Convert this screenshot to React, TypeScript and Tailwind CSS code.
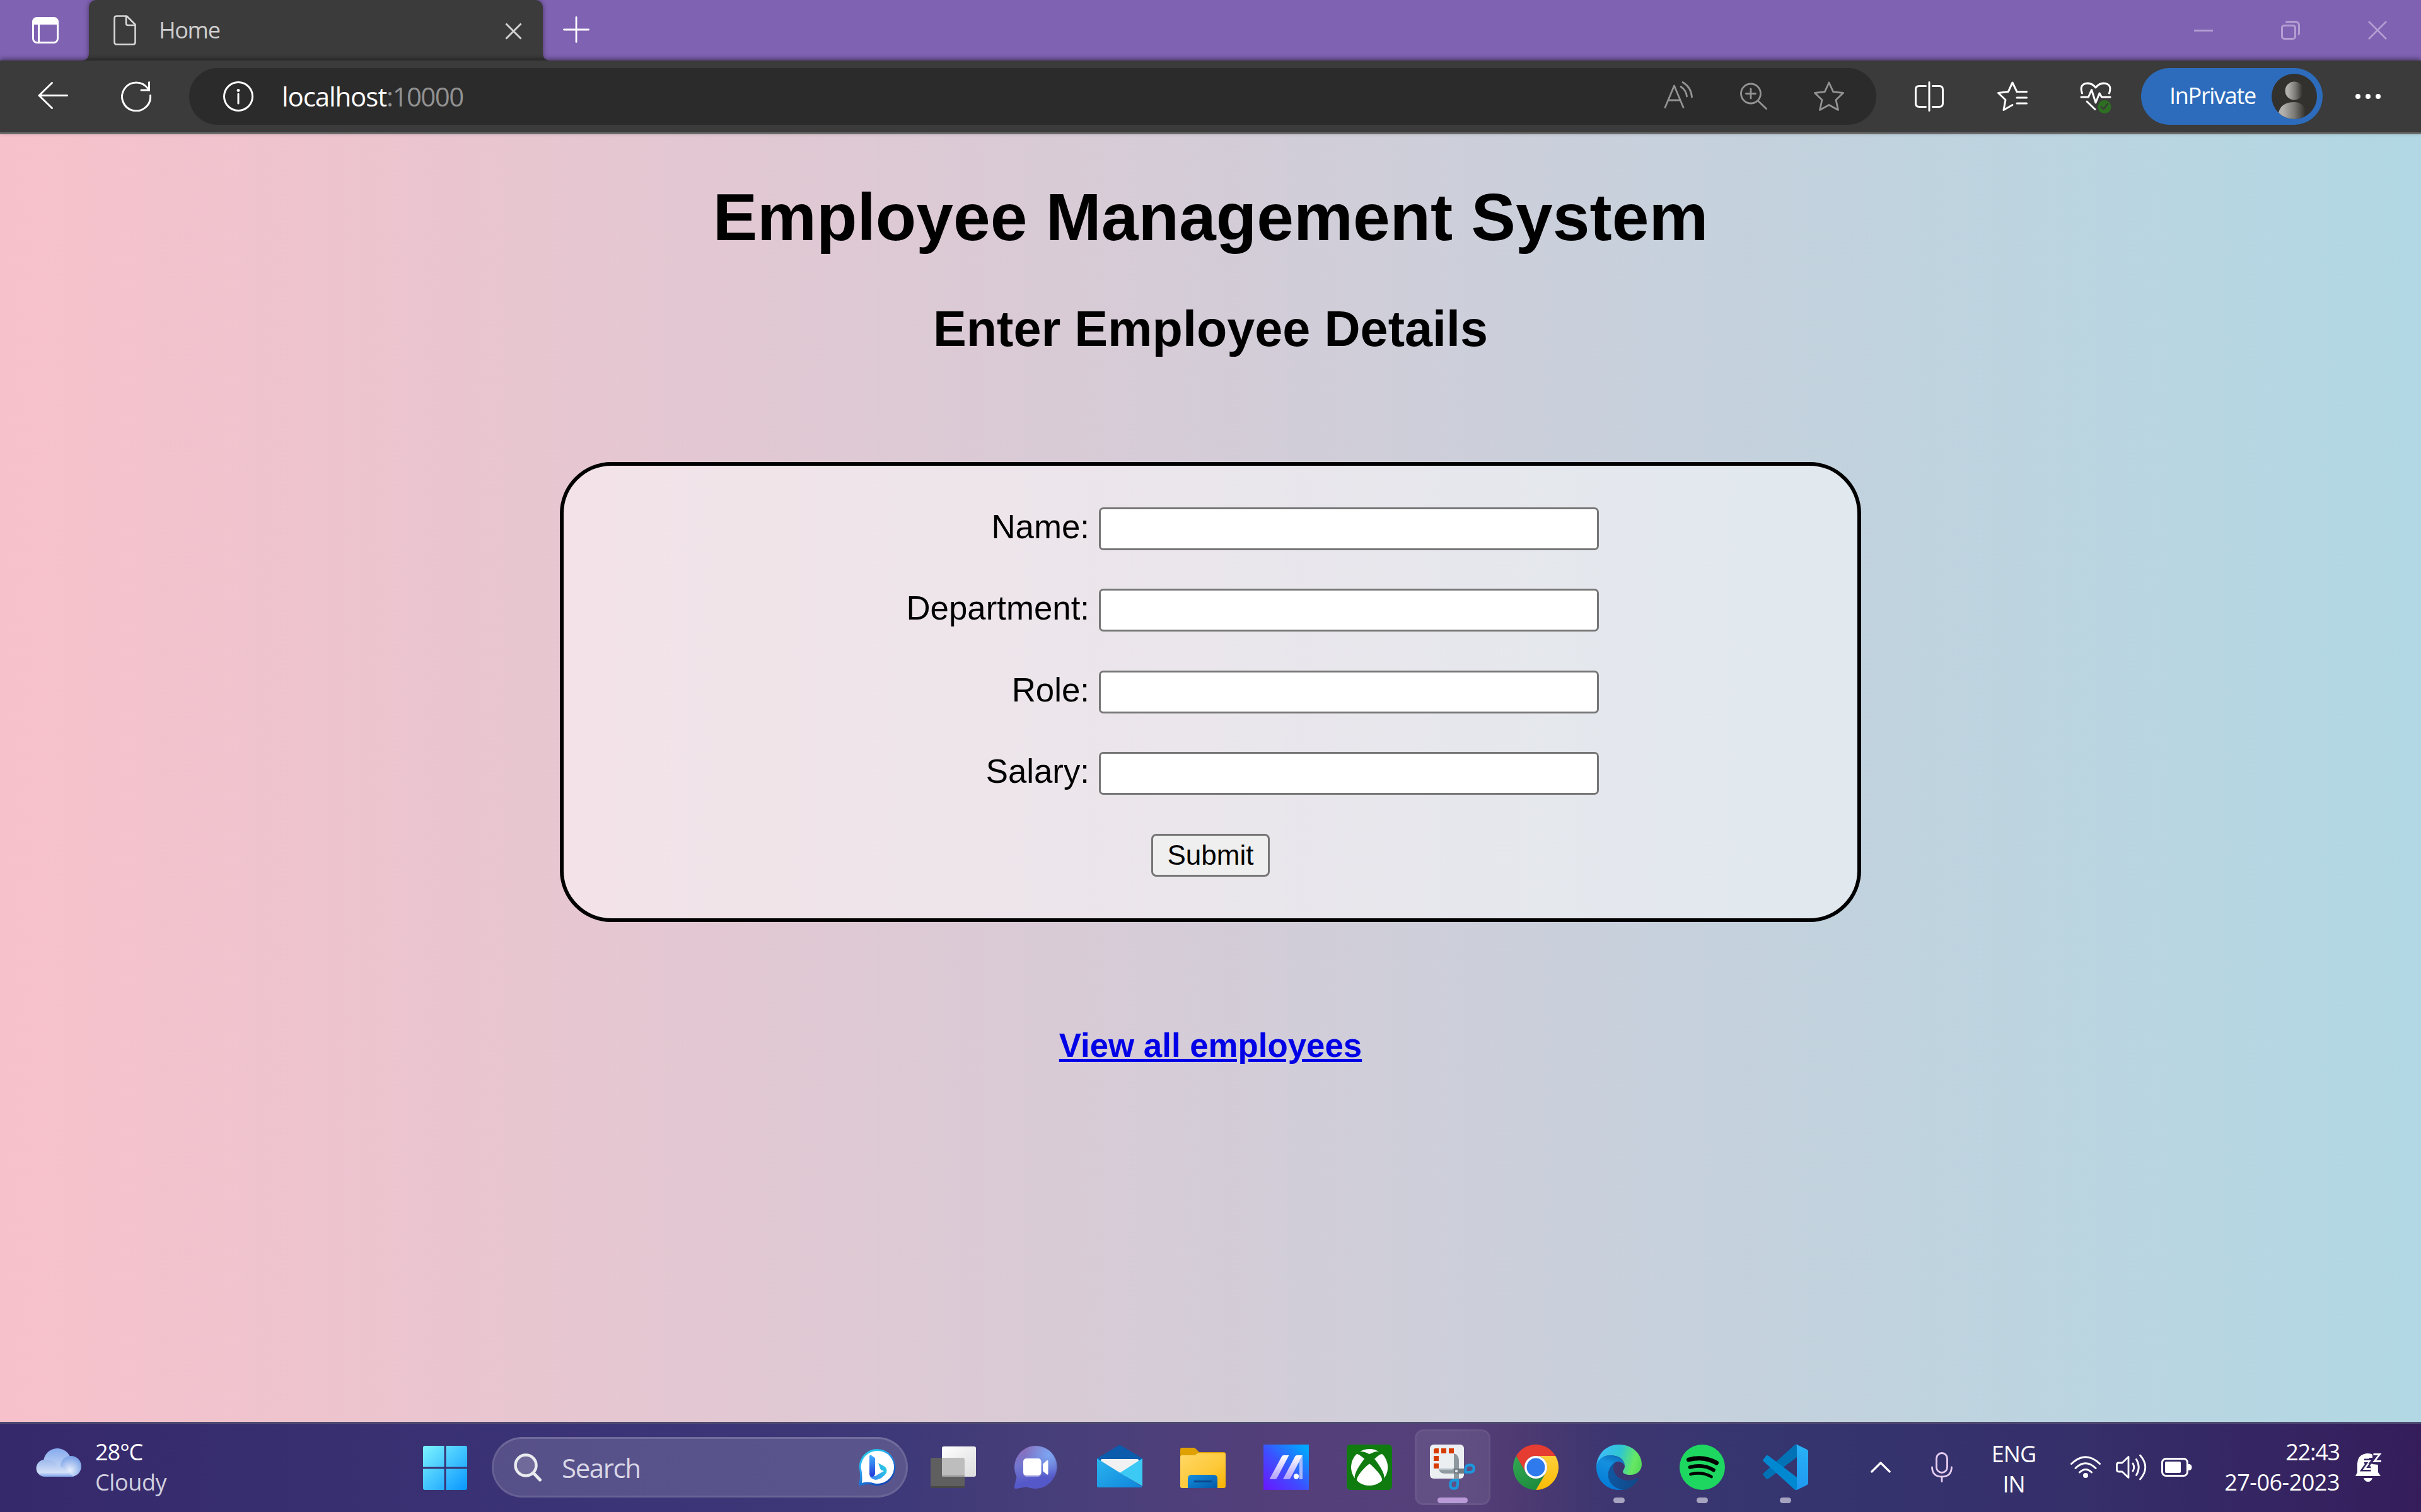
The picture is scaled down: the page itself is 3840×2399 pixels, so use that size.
import React from "react";
import { FaXbox } from "react-icons/fa";

const UI_FONT = "font-['Open_Sans','Noto_Sans',sans-serif]";
const PAGE_FONT = "font-['Liberation_Sans',Arial,sans-serif]";

/* ---------- Title bar ---------- */

function TabStrip() {
  return (
    <div className="flex h-[96px] items-stretch bg-[#8062b3]">
      <div className="flex w-[141px] items-center pl-[51px]">
        <svg className="size-[42px]" viewBox="0 0 42 42" fill="none">
          <rect x="1.5" y="1.5" width="39" height="39" rx="6" stroke="#fff" strokeWidth="3" />
          <path d="M1 7Q1 1 7 1H35Q41 1 41 7V12H1Z" fill="#fff" />
          <path d="M10.5 12V40" stroke="#fff" strokeWidth="3" />
        </svg>
      </div>

      <div className="relative flex w-[720px] items-center rounded-t-[12px] bg-[#3b3b3b] pl-[39px] pr-[33px] shadow-[0_0_9px_rgba(0,0,0,0.45)]">
        <svg className="absolute -left-[12px] bottom-0 size-[12px]" viewBox="0 0 12 12">
          <path d="M12 0V12H0Q12 12 12 0Z" fill="#3b3b3b" />
        </svg>
        <svg className="absolute -right-[12px] bottom-0 size-[12px]" viewBox="0 0 12 12">
          <path d="M0 0V12H12Q0 12 0 0Z" fill="#3b3b3b" />
        </svg>
        <svg className="h-[48px] w-[36px]" viewBox="0 0 36 48" fill="none" stroke="#d8d8d8" strokeWidth="2.6" strokeLinejoin="round">
          <path d="M5 1.5H21L34.5 15V43Q34.5 46.5 31 46.5H5Q1.5 46.5 1.5 43V5Q1.5 1.5 5 1.5Z" />
          <path d="M20 2V13Q20 16 23 16H34" />
        </svg>
        <span className="ml-[36px] flex-1 pb-px text-[36px] leading-[48px] tracking-[-1.3px] text-[#cfcfcf]">Home</span>
        <svg className="mt-[3px] size-[27px]" viewBox="0 0 27 27" stroke="#d2d2d2" strokeWidth="3">
          <path d="M1.5 1.5L25.500 25.500M25.500 1.500L1.500 25.500" />
        </svg>
      </div>

      <div className="flex items-center pl-[32px] pb-[3px]">
        <svg className="size-[42px]" viewBox="0 0 42 42" stroke="#fff" strokeWidth="2.8" strokeLinecap="round">
          <path d="M21 1.500V40.500M1.500 21H40.500" />
        </svg>
      </div>

      <div className="ml-auto flex text-[#b39fd2]">
        <div className="flex w-[138px] items-center justify-center">
          <div className="h-[3px] w-[30px] bg-[#b39fd2]" />
        </div>
        <div className="flex w-[138px] items-center justify-center">
          <svg className="size-[30px]" viewBox="0 0 30 30" fill="none" stroke="currentColor" strokeWidth="3">
            <rect x="1.500" y="7.500" width="21" height="21" rx="3.500" />
            <path d="M7.500 2.500Q9 1.500 11 1.500H22Q28.500 1.500 28.500 8V19Q28.500 21 27.500 22.500" />
          </svg>
        </div>
        <div className="flex w-[138px] items-center justify-center">
          <svg className="size-[30px]" viewBox="0 0 30 30" stroke="currentColor" strokeWidth="2.600">
            <path d="M1 1L29 29M29 1L1 29" />
          </svg>
        </div>
      </div>
    </div>
  );
}

/* ---------- Address bar ---------- */

function ToolSlot({ children }: { children: React.ReactNode }) {
  return <div className="flex w-[132px] shrink-0 items-center justify-center">{children}</div>;
}

function Avatar() {
  return (
    <svg className="size-[72px]" viewBox="0 0 72 72">
      <defs>
        <linearGradient id="avatar" x1="0" x2="1" y1="0" y2="0">
          <stop offset="0.15" stopColor="#b3b1ae" />
          <stop offset="0.55" stopColor="#7d7b78" />
          <stop offset="0.95" stopColor="#33312e" />
        </linearGradient>
        <clipPath id="avatarClip">
          <circle cx="36" cy="36" r="36" />
        </clipPath>
      </defs>
      <circle cx="36" cy="36" r="36" fill="#33312e" />
      <g clipPath="url(#avatarClip)" fill="url(#avatar)">
        <circle cx="36" cy="27" r="14.500" />
        <path d="M11 62Q15 45 36 45Q51 45 56 62L50 72H22Z" />
      </g>
    </svg>
  );
}

function Toolbar() {
  return (
    <div className="relative z-10 flex h-[117px] items-center border-b-[3px] border-[#6b6b6b] bg-[#3b3b3b] pl-[18px] text-white shadow-[0_-3px_7px_rgba(0,0,0,0.4)]">
      <ToolSlot>
        <svg className="size-[48px]" viewBox="0 0 48 48" fill="none" stroke="currentColor" strokeWidth="3" strokeLinecap="round" strokeLinejoin="round">
          <path d="M22.500 2.500L2 22.500L22.500 42.500M2 22.500H46.500" />
        </svg>
      </ToolSlot>
      <ToolSlot>
        <svg className="size-[48px]" viewBox="0 0 48 48" fill="none" stroke="currentColor" strokeWidth="3" strokeLinecap="round">
          <path d="M46.500 22.500A22.500 22.500 0 1 1 42.500 11.500L44.500 14" />
          <path d="M44.500 1.500V14H32" />
        </svg>
      </ToolSlot>

      <div className="mx-[18px] flex h-[90px] w-[2676px] shrink-0 items-center rounded-full bg-[#2b2b2b] pl-[54px]">
        <svg className="size-[48px]" viewBox="0 0 48 48" fill="none" stroke="currentColor" strokeWidth="3">
          <circle cx="24" cy="24" r="22.500" />
          <path d="M24 20V35" strokeLinecap="round" />
          <circle cx="24" cy="14.500" r="2.400" fill="currentColor" stroke="none" />
        </svg>
        <div className="ml-[45px] flex-1 pb-px text-[42px] leading-[56px]">
          <span className="tracking-[-1.1px]">localhost</span>
          <span className="tracking-[-1.6px] text-[#929292]">:10000</span>
        </div>
        <div className="flex items-center text-[#939393]">
          <svg className="size-[48px]" viewBox="0 0 48 48" fill="none" stroke="currentColor" strokeWidth="2.800" strokeLinecap="round" strokeLinejoin="round">
            <path d="M2 41.500L16.500 7L31 41.500M7 30H26" />
            <path d="M27 8.500Q35.500 14 36.500 24" />
            <path d="M30 1.500Q43.500 9.500 44.500 25" />
          </svg>
          <svg className="ml-[72px] size-[48px]" viewBox="0 0 48 48" fill="none" stroke="currentColor" strokeWidth="2.800" strokeLinecap="round">
            <circle cx="18" cy="19.500" r="15.500" />
            <path d="M29.500 31L42.500 43.500M18 12V27M10.500 19.500H25.500" />
          </svg>
          <svg className="ml-[69px] mr-[50px] size-[50px]" viewBox="0 0 50 50" fill="none" stroke="currentColor" strokeWidth="2.800" strokeLinejoin="round">
            <path d="M25 3L31.700 17.600L47.500 19.500L36 30.500L39.500 46.500L25 38.500L10.500 46.500L14 30.500L2.500 19.500L18.300 17.600Z" />
          </svg>
        </div>
      </div>

      <ToolSlot>
        <svg className="size-[48px]" viewBox="0 0 48 48" fill="none" stroke="currentColor" strokeWidth="3" strokeLinecap="round">
          <path d="M24 1.500V46.500M18.500 7.500H8Q2.500 7.500 2.500 13V35Q2.500 40.500 8 40.500H18.500M29.500 7.500H40Q45.500 7.500 45.500 13V35Q45.500 40.500 40 40.500H29.500" />
        </svg>
      </ToolSlot>
      <ToolSlot>
        <svg className="size-[50px]" viewBox="0 0 50 50" fill="none" stroke="currentColor" strokeWidth="3" strokeLinecap="round" strokeLinejoin="round">
          <path d="M47.500 17.500H32L25 3L18.300 17.600L2.500 19.500L14 30.500L11 46.500L25 38.500" />
          <path d="M32 27H47.500M32 36H47.500" />
        </svg>
      </ToolSlot>
      <ToolSlot>
        <svg className="size-[54px]" viewBox="0 0 54 54" fill="none" strokeLinecap="round" strokeLinejoin="round">
          <g stroke="#fff" strokeWidth="3">
            <path d="M5.500 22Q1 9 11 6.500Q20 4.500 27 13Q34 4.500 43 6.500Q53 9 48.500 22" />
            <path d="M4 28H15.500L20.500 16.500L27 37L33 22L36.500 28H50" />
            <path d="M13 35L26 47.500" />
          </g>
          <circle cx="41" cy="43.500" r="10.500" fill="#2d7021" />
          <path d="M36 43.500L39.500 47L46 39" stroke="#3b3b3b" strokeWidth="2.600" />
        </svg>
      </ToolSlot>

      <div className="ml-[6px] flex h-[90px] w-[288px] shrink-0 items-center justify-between rounded-full bg-[#2d6cbc] pl-[45px] pr-[9px]">
        <span className="pb-[2px] text-[36px] leading-[48px] tracking-[-1.3px]">InPrivate</span>
        <Avatar />
      </div>

      <div className="ml-[6px] flex w-[132px] items-center justify-center gap-[8px]">
        <span className="size-[8px] rounded-full bg-white" />
        <span className="size-[8px] rounded-full bg-white" />
        <span className="size-[8px] rounded-full bg-white" />
      </div>
    </div>
  );
}

/* ---------- Web page ---------- */

const FIELDS = ["Name", "Department", "Role", "Salary"];

function EmployeePage() {
  return (
    <main className={`${PAGE_FONT} flex h-[2043px] flex-col items-center bg-[linear-gradient(90deg,#f7c1cb,#b1d8e4)] pt-[71px] text-[52.8px] text-black`}>
      <h1 className="text-[105.6px] leading-[120px] font-bold">Employee Management System</h1>
      <h2 className="mt-[72px] text-[79.2px] leading-[91px] font-bold">Enter Employee Details</h2>
      <form className="mt-[166px] flex h-[730px] w-[2064px] flex-col gap-[61.4px] rounded-[82px] border-[6px] border-black bg-white/50 pt-[66px]">
        {FIELDS.map((field) => (
          <div key={field} className="flex gap-[15px]">
            <label className="w-[834px] text-right leading-[62px]">{field}:</label>
            <input className="h-[68px] w-[793px] rounded-[7px] border-[3px] border-[#767676] bg-white" />
          </div>
        ))}
        <button type="button" className="h-[68px] w-[188px] self-center rounded-[8px] border-[3px] border-[#767676] bg-[#efefef] text-[44px] leading-[60px]">
          Submit
        </button>
      </form>
      <a className="mt-[166px] leading-[60px] font-bold text-[#0000e6] underline" href="#employees">
        View all employees
      </a>
    </main>
  );
}

/* ---------- Taskbar icons ---------- */

function CloudIcon() {
  return (
    <svg className="h-[45px] w-[72px]" viewBox="0 0 72 45">
      <defs>
        <linearGradient id="cloudTop" x1="0" x2="0" y1="0" y2="1">
          <stop offset="0" stopColor="#86abee" />
          <stop offset="0.700" stopColor="#c3d4f4" />
        </linearGradient>
        <radialGradient id="cloudRight" cx="0.450" cy="0.700" r="0.700">
          <stop offset="0" stopColor="#e8effc" />
          <stop offset="1" stopColor="#769ee6" />
        </radialGradient>
        <linearGradient id="cloudLeft" x1="0" x2="0" y1="0" y2="1">
          <stop offset="0" stopColor="#9db9ec" />
          <stop offset="0.750" stopColor="#d3e0f8" />
          <stop offset="1" stopColor="#7ea4ea" />
        </linearGradient>
      </defs>
      <circle cx="34" cy="22" r="22" fill="url(#cloudTop)" />
      <circle cx="55.500" cy="28.500" r="16.500" fill="url(#cloudRight)" />
      <path d="M14 18Q34 18 36 34Q38 26 42 30L60 45H14A13.500 13.500 0 0 1 14 18Z" fill="url(#cloudLeft)" />
    </svg>
  );
}

function WindowsIcon() {
  return (
    <svg className="size-[70px]" viewBox="0 0 70 70">
      <defs>
        <linearGradient id="win" x1="0" y1="0" x2="70" y2="70" gradientUnits="userSpaceOnUse">
          <stop offset="0" stopColor="#7cf4ff" />
          <stop offset="1" stopColor="#0996ff" />
        </linearGradient>
      </defs>
      <path fill="url(#win)" d="M3 0H33.500V33.500H0V3Q0 0 3 0ZM36.500 0H67Q70 0 70 3V33.500H36.500ZM0 36.500H33.500V70H3Q0 70 0 67ZM36.500 36.500H70V67Q70 70 67 70H36.500Z" />
    </svg>
  );
}

function BingIcon() {
  return (
    <svg className="h-[59px] w-[59px]" viewBox="0 0 59 59">
      <defs>
        <linearGradient id="bingRing" x1="0" x2="0.600" y1="0" y2="1">
          <stop offset="0" stopColor="#1be3ea" />
          <stop offset="0.450" stopColor="#2aa3f0" />
          <stop offset="1" stopColor="#0b45b8" />
        </linearGradient>
        <linearGradient id="bingStem" x1="0" x2="0" y1="0" y2="1">
          <stop offset="0" stopColor="#3fb0ff" />
          <stop offset="1" stopColor="#2238d8" />
        </linearGradient>
        <linearGradient id="bingLeg" x1="0" x2="1" y1="0.500" y2="0">
          <stop offset="0" stopColor="#3f8df5" />
          <stop offset="1" stopColor="#22d3e0" />
        </linearGradient>
      </defs>
      <path d="M29.500 0A29 29 0 1 1 24 57.500Q13 54 3 58.500Q0 59 0 56Q4 44 0.500 29A29 29 0 0 1 29.500 0Z" fill="url(#bingRing)" />
      <path d="M29.500 3A26 26 0 1 1 25 54.500Q14 51 5 54Q6.500 42 3.500 29A26 26 0 0 1 29.500 3Z" fill="#fff" />
      <path d="M17 40Q18 48 27 49Q37 48 44 38Q46 29 38 26L31 22.500L35 33L40 35L26 43Z" fill="url(#bingLeg)" />
      <path d="M17 11Q17.500 8.500 20 10L26 14.500V40Q24 44 21 44Q17 43 17 39Z" fill="url(#bingStem)" />
    </svg>
  );
}

function TaskViewIcon() {
  return (
    <svg className="size-[72px]" viewBox="0 0 72 72">
      <defs>
        <linearGradient id="tvLight" x1="0" y1="0" x2="1" y2="1">
          <stop offset="0" stopColor="#fff" />
          <stop offset="1" stopColor="#dcdcdc" />
        </linearGradient>
      </defs>
      <rect x="0" y="21" width="54" height="48" rx="3" fill="#5f5f5f" />
      <path d="M0 66H54Q54 69 51 69H3Q0 69 0 66Z" fill="#474747" />
      <rect x="18" y="3" width="54" height="48" rx="3" fill="url(#tvLight)" />
      <path d="M18 21H51Q54 21 54 24V51H21Q18 51 18 48Z" fill="#bdbdbd" />
      <path d="M18 48H54V51H21Q18 51 18 48Z" fill="#a5a5a5" />
    </svg>
  );
}

function ChatIcon() {
  return (
    <svg className="size-[72px]" viewBox="0 0 72 72">
      <defs>
        <linearGradient id="chat" x1="0.200" y1="0" x2="0.500" y2="1">
          <stop offset="0" stopColor="#8f6fb8" />
          <stop offset="0.400" stopColor="#7376cf" />
          <stop offset="0.800" stopColor="#5558c8" />
        </linearGradient>
        <radialGradient id="chatGlow" cx="0.800" cy="0.200" r="0.550">
          <stop offset="0" stopColor="#7ea6f2" />
          <stop offset="1" stopColor="#7ea6f2" stopOpacity="0" />
        </radialGradient>
      </defs>
      <path d="M35 2A34 34 0 1 1 20 67L4 70Q0 70 1 66L4.500 51A34 34 0 0 1 35 2Z" fill="url(#chat)" />
      <circle cx="35" cy="36" r="34" fill="url(#chatGlow)" />
      <rect x="15" y="24" width="28.500" height="27" rx="5" fill="#9c9be0" />
      <rect x="15" y="22" width="28.500" height="27" rx="5" fill="#fff" />
      <path d="M46 31L52 25.500Q54.500 24 54.500 27V46Q54.500 49 52 47L46 42Z" fill="#fff" />
    </svg>
  );
}

function MailIcon() {
  return (
    <svg className="size-[72px]" viewBox="0 0 72 72">
      <defs>
        <linearGradient id="mailFront" x1="0" y1="0" x2="1" y2="1">
          <stop offset="0" stopColor="#2bb4ee" />
          <stop offset="1" stopColor="#0f86dc" />
        </linearGradient>
      </defs>
      <path d="M0 22L34 1.500Q36 0.500 38 1.500L72 22V30H0Z" fill="#0b5cad" />
      <path d="M6 25Q6 23 8 23H64Q66 23 66 25V50H6Z" fill="#f1f1f1" />
      <path d="M72 22V66L36 45Z" fill="#3ccaf5" />
      <path d="M0 22L72 67Q71 68 70 68H2Q0 68 0 66Z" fill="url(#mailFront)" />
    </svg>
  );
}

function FolderIcon() {
  return (
    <svg className="size-[72px]" viewBox="0 0 72 72">
      <defs>
        <linearGradient id="folder" x1="0" y1="0" x2="1" y2="1">
          <stop offset="0" stopColor="#ffd766" />
          <stop offset="0.600" stopColor="#fdc938" />
          <stop offset="1" stopColor="#f5b100" />
        </linearGradient>
        <linearGradient id="dock" x1="0" y1="0" x2="1" y2="1">
          <stop offset="0" stopColor="#1490df" />
          <stop offset="1" stopColor="#0558a8" />
        </linearGradient>
      </defs>
      <path d="M0 8Q0 5 3 5H21Q23 5 24.500 6.500L30 12H69Q72 12 72 15V30H0Z" fill="#dfa000" />
      <path d="M0 20Q0 17 3 17H21Q24 17 26 15L28 13.500H69Q72 13.500 72 16V66Q72 69 69 69H3Q0 69 0 66Z" fill="url(#folder)" />
      <path d="M12 69V54Q12 48 18 48H53Q59 48 59 54V69Z" fill="url(#dock)" />
      <rect x="21.500" y="57" width="29" height="3" rx="1.500" fill="#0b4786" />
    </svg>
  );
}

function MyAsusIcon() {
  return (
    <svg className="size-[72px]" viewBox="0 0 72 72">
      <defs>
        <linearGradient id="asus" x1="1" y1="0" x2="0" y2="1">
          <stop offset="0.080" stopColor="#00a6ff" />
          <stop offset="0.550" stopColor="#3f4dff" />
          <stop offset="1" stopColor="#6b16ff" />
        </linearGradient>
        <linearGradient id="asusBar" x1="0" y1="0" x2="0" y2="1">
          <stop offset="0" stopColor="#fff" />
          <stop offset="1" stopColor="#b0a0ff" />
        </linearGradient>
      </defs>
      <rect width="72" height="72" fill="url(#asus)" />
      <path d="M9.500 55L29 19Q30 17 32 17H40.500L21.500 53Q20.500 55 18.500 55Z" fill="url(#asusBar)" />
      <path d="M31 55L50 19Q51 17 53 17H62L43 53Q42 55 40 55Z" fill="url(#asusBar)" />
      <path d="M57 26L62 17V55H57Z" fill="#a9b9ff" />
      <circle cx="52" cy="50.500" r="4.200" fill="#fff" />
    </svg>
  );
}

function XboxIcon() {
  return (
    <div className="flex size-[72px] items-center justify-center rounded-[6px] bg-[#107c10]">
      <FaXbox className="size-[60px] text-white" />
    </div>
  );
}

function SnipIcon() {
  return (
    <svg className="size-[72px]" viewBox="0 0 72 72">
      <rect width="54" height="54" rx="6" fill="#eceff2" />
      <path d="M6 14V9Q6 6 9 6H14V14ZM18 6H26V14H18ZM30 6H38V14H30ZM6 18H14V26H6ZM6 30H14V38H6Z" fill="#d83b01" />
      <path d="M38 14Q46 16 46 26V56H38Z" fill="#8e989f" />
      <path d="M14 38H54V46H24Q15 46 14 38Z" fill="#8e989f" />
      <path d="M14 38H36V40.500H14.500Z" fill="#b4bfc7" />
      <path d="M38 38H54V46H38Z" fill="#727b82" />
      <circle cx="42" cy="42" r="2.200" fill="#dfe4e8" />
      <g fill="none" stroke="#1c97dc" strokeWidth="4.200">
        <path d="M56.500 44V38.500Q56.500 32.300 63.500 32.300Q69.800 32.300 69.800 38Q69.800 44 63 44Z" />
        <path d="M44 56.500H38.500Q32.300 56.500 32.300 63.500Q32.300 69.800 38 69.800Q44 69.800 44 63Z" />
      </g>
    </svg>
  );
}

function ChromeIcon() {
  return (
    <svg className="size-[72px]" viewBox="0 0 72 72">
      <defs>
        <linearGradient id="chYellow" x1="0" x2="0" y1="0" y2="1">
          <stop offset="0" stopColor="#fdcf3a" />
          <stop offset="1" stopColor="#fbbc05" />
        </linearGradient>
        <linearGradient id="chGreen" x1="0" x2="0.500" y1="0" y2="1">
          <stop offset="0" stopColor="#34a853" />
          <stop offset="1" stopColor="#1e8e3e" />
        </linearGradient>
      </defs>
      <path d="M4.800 18A36 36 0 0 1 67.200 18H36A18 18 0 0 0 20.400 45Z" fill="#e53d31" />
      <path d="M62.400 18H36A18 18 0 0 1 51.600 45L36 72A36 36 0 0 0 67.200 18Z" fill="url(#chYellow)" />
      <path d="M36 72A36 36 0 0 1 4.800 18L20.400 45A18 18 0 0 0 51.600 45Z" fill="url(#chGreen)" />
      <circle cx="36" cy="36" r="18" fill="#fff" />
      <circle cx="36" cy="36" r="14.500" fill="#2f7bee" />
    </svg>
  );
}

function EdgeIcon() {
  return (
    <svg className="size-[72px]" viewBox="0 0 72 72">
      <defs>
        <linearGradient id="edgeTop" x1="0" x2="1" y1="0.300" y2="0.500">
          <stop offset="0.050" stopColor="#3fbdfb" />
          <stop offset="0.500" stopColor="#2fc6d2" />
          <stop offset="0.850" stopColor="#66e863" />
          <stop offset="1" stopColor="#58dc5c" />
        </linearGradient>
        <linearGradient id="edgeMid" x1="0.600" x2="0.300" y1="0" y2="1">
          <stop offset="0" stopColor="#0c72c0" />
          <stop offset="0.250" stopColor="#1590de" />
          <stop offset="1" stopColor="#0078d7" />
        </linearGradient>
        <linearGradient id="edgeDark" x1="0" x2="1" y1="0" y2="0.300">
          <stop offset="0" stopColor="#0e5aa5" />
          <stop offset="1" stopColor="#114a8b" />
        </linearGradient>
      </defs>
      <path d="M0 36C0 24 9 17 22 17C34 17 45 24 45 34C43 29 39 27 34 27C28 27 19 36 19 48C19 60 28 70 44 71C41 72 38 72 36 72C16 72 0 56 0 36Z" fill="url(#edgeMid)" />
      <path d="M34 27C30 28 27 32 27 37C27 48 38 57 50 57C58 57 63 54 65 53.500C67 53.500 67 55 66 56C60 66 50 72 42 72C28 70 19 60 19 49C19 38 26 28 34 27Z" fill="url(#edgeDark)" />
      <path d="M0 34C2 12 18 0 36 0C58 0 72 16 72 31C72 42 64 48 54 48C47 48 42 46 42 43C42 41 45 39 45 34C45 24 36 17 22 17C10 17 2 24 0 34Z" fill="url(#edgeTop)" />
    </svg>
  );
}

function SpotifyIcon() {
  return (
    <svg className="size-[72px]" viewBox="0 0 72 72" fill="none" stroke="#000" strokeLinecap="round">
      <circle cx="36" cy="36" r="36" fill="#1ed760" stroke="none" />
      <path d="M14.500 24Q38 17.500 58.500 29" strokeWidth="7" />
      <path d="M16.500 36Q37 30 54 40.500" strokeWidth="5.800" />
      <path d="M17.500 47Q35 42.500 50.500 51" strokeWidth="4.800" />
    </svg>
  );
}

function VsCodeIcon() {
  return (
    <svg className="size-[72px]" viewBox="0 0 72 72">
      <defs>
        <linearGradient id="vsSlab" x1="0" x2="0" y1="0" y2="1">
          <stop offset="0" stopColor="#29b2f6" />
          <stop offset="1" stopColor="#1f98f0" />
        </linearGradient>
      </defs>
      <path d="M50 1L1 45.500Q-0.500 47 1 48.800L5.200 54Q7 55.800 9 54.300L54 20V0Q51.500 -0.300 50 1Z" fill="#0072b5" />
      <path d="M50 71L1 26.500Q-0.500 25 1 23.200L5.200 18Q7 16.200 9 17.700L54 52V72Q51.500 72.300 50 71Z" fill="#0088d1" />
      <path d="M52 0.200Q53.500 -0.200 55 0.600L70 7.800Q72 8.800 72 11V61Q72 63.200 70 64.200L55 71.400Q53.500 72.200 52 71.800Q54 71.500 54 69V3Q54 0.500 52 0.200Z" fill="url(#vsSlab)" />
    </svg>
  );
}

type App = { name: string; icon: React.ReactNode; state?: "running" | "active" };

const APPS: App[] = [
  { name: "Task view", icon: <TaskViewIcon /> },
  { name: "Chat", icon: <ChatIcon /> },
  { name: "Mail", icon: <MailIcon /> },
  { name: "File Explorer", icon: <FolderIcon /> },
  { name: "MyASUS", icon: <MyAsusIcon /> },
  { name: "Xbox", icon: <XboxIcon /> },
  { name: "Snipping Tool", icon: <SnipIcon />, state: "active" },
  { name: "Chrome", icon: <ChromeIcon /> },
  { name: "Edge", icon: <EdgeIcon />, state: "running" },
  { name: "Spotify", icon: <SpotifyIcon />, state: "running" },
  { name: "VS Code", icon: <VsCodeIcon />, state: "running" },
];

function AppButton({ app }: { app: App }) {
  const active = app.state === "active";
  return (
    <div
      className={
        active
          ? "relative flex size-[120px] items-center justify-center rounded-[14px] border-[3px] border-white/5 bg-white/8"
          : "relative flex size-[120px] items-center justify-center"
      }
    >
      {app.icon}
      {active && <span className="absolute bottom-0 h-[9px] w-[48px] rounded-full bg-[#b999d6]" />}
      {app.state === "running" && <span className="absolute bottom-[3px] h-[9px] w-[18px] rounded-full bg-[#a6a3c0]" />}
    </div>
  );
}

function Tray() {
  return (
    <>
      <svg className="ml-[75px] h-[18px] w-[32px]" viewBox="0 0 32 18" fill="none" stroke="#fff" strokeWidth="3.200" strokeLinecap="round" strokeLinejoin="round">
        <path d="M1.800 16L16 2L30.200 16" />
      </svg>
      <svg className="ml-[64px] h-[48px] w-[34px]" viewBox="0 0 34 48" fill="none" stroke="#e8cdf0" strokeWidth="2.800" strokeLinecap="round">
        <rect x="8.500" y="1.500" width="17" height="31" rx="8.500" />
        <path d="M1.500 24Q2 39 17 39Q32 39 32.500 24M17 39V46.500" />
      </svg>
      <div className="ml-[60px] mt-[5px] w-[74px] text-center text-[36px] leading-[48px] tracking-[-1px]">
        <div>ENG</div>
        <div>IN</div>
      </div>
      <svg className="ml-[53px] h-[36px] w-[48px]" viewBox="0 0 48 36" fill="none" stroke="#fff" strokeWidth="3" strokeLinecap="round">
        <path d="M1.500 12.500Q24 -9 46.500 12.500" />
        <path d="M8 19.500Q24 4 40 19.500" />
        <path d="M14.500 26Q24 17 33.500 26" />
        <circle cx="24" cy="31" r="4" fill="#fff" stroke="none" />
      </svg>
      <svg className="ml-[24px] h-[42px] w-[49px]" viewBox="0 0 49 42" fill="none" stroke="#fff" strokeWidth="2.800" strokeLinecap="round" strokeLinejoin="round">
        <path d="M1.500 17Q1.500 14 4.500 14H10L20 4.500V37.500L10 28H4.500Q1.500 28 1.500 25Z" />
        <path d="M27 15Q30.500 21 27 27M32.500 8.500Q40 21 32.500 33.500M38.500 2Q55 21 38.500 40" />
      </svg>
      <svg className="ml-[23px] h-[30px] w-[49px]" viewBox="0 0 49 30" fill="none">
        <rect x="1.500" y="1.500" width="40" height="27" rx="6" stroke="#fff" strokeWidth="3" />
        <rect x="6" y="6" width="25" height="18" rx="2" fill="#fff" />
        <path d="M43 10H45Q48.500 11 48.500 15Q48.500 19 45 20H43Z" fill="#fff" />
      </svg>
      <div className="mb-px ml-[38px] w-[196px] text-right text-[36px] leading-[48px]">
        <div className="tracking-[-1.2px]">22:43</div>
        <div className="tracking-[-0.5px]">27-06-2023</div>
      </div>
      <svg className="ml-[25px] h-[46px] w-[43px]" viewBox="0 0 43 46" fill="none">
        <path d="M3 31V17Q4 2 19 1Q25 1 27 3V8H22V13L27 13V18L36 19V31L40 37H0Z" fill="#fff" />
        <path d="M13 40H27Q25 46 20 46Q15 46 13 40Z" fill="#fff" />
        <path d="M14 13.500H23L14.500 25.500H24.500" stroke="#362562" strokeWidth="8" />
        <path d="M14 13.500H23L14.500 25.500H24.500" stroke="#fff" strokeWidth="2.800" />
        <path d="M28 2.500H38.500L29 13.500H40" stroke="#362562" strokeWidth="8" />
        <path d="M28.500 2.500H38.500L30 13.500H41" stroke="#fff" strokeWidth="2.800" />
      </svg>
    </>
  );
}

function Taskbar() {
  return (
    <footer className="h-[143px] border-t-[3px] border-[#4e4a70] bg-[linear-gradient(90deg,#36296b_0px,#372f70_500px,#3b3477_1000px,#3e3978_1440px,#483f7a_1700px,#543f7a_2060px,#55407a_2300px,#4f3a72_2400px,#3d3670_2540px,#353570_2800px,#352f6a_3300px,#351d5b_3840px)] text-white">
      <div className="flex h-[138px] items-center">
        <div className="ml-[57px] flex h-full w-[614px] items-center">
          <div className="mb-[15px]">
            <CloudIcon />
          </div>
          <div className="mb-px ml-[22px] text-[36px] leading-[48px]">
            <div className="tracking-[-1px]">28°C</div>
            <div className="tracking-[-0.4px] text-[#d0cede]">Cloudy</div>
          </div>
        </div>
        <div className="mt-[2px]">
          <WindowsIcon />
        </div>
        <div className="ml-[39px] flex h-[96px] w-[660px] items-center rounded-full border-[3px] border-white/10 border-t-white/15 bg-white/15 pl-[32px] pr-[16px]">
          <svg className="size-[45px]" viewBox="0 0 45 45" fill="none" stroke="#e9ecee" strokeLinecap="round">
            <circle cx="19" cy="19" r="16.500" strokeWidth="4.500" fill="#fff" fillOpacity="0.150" />
            <path d="M31 31L41.500 42" strokeWidth="5" />
          </svg>
          <span className="ml-[31px] flex-1 pt-[2px] text-[42px] leading-[56px] tracking-[-1.4px] text-[#d9d7e6]">Search</span>
          <BingIcon />
        </div>
        <div className="ml-[12px] flex gap-[12px]">
          {APPS.map((app) => (
            <AppButton key={app.name} app={app} />
          ))}
        </div>
        <div className="flex flex-1 items-center">
          <Tray />
        </div>
      </div>
    </footer>
  );
}

export default function App() {
  return (
    <div className={`${UI_FONT} h-[2399px] w-[3840px] overflow-hidden`}>
      <TabStrip />
      <Toolbar />
      <EmployeePage />
      <Taskbar />
    </div>
  );
}
